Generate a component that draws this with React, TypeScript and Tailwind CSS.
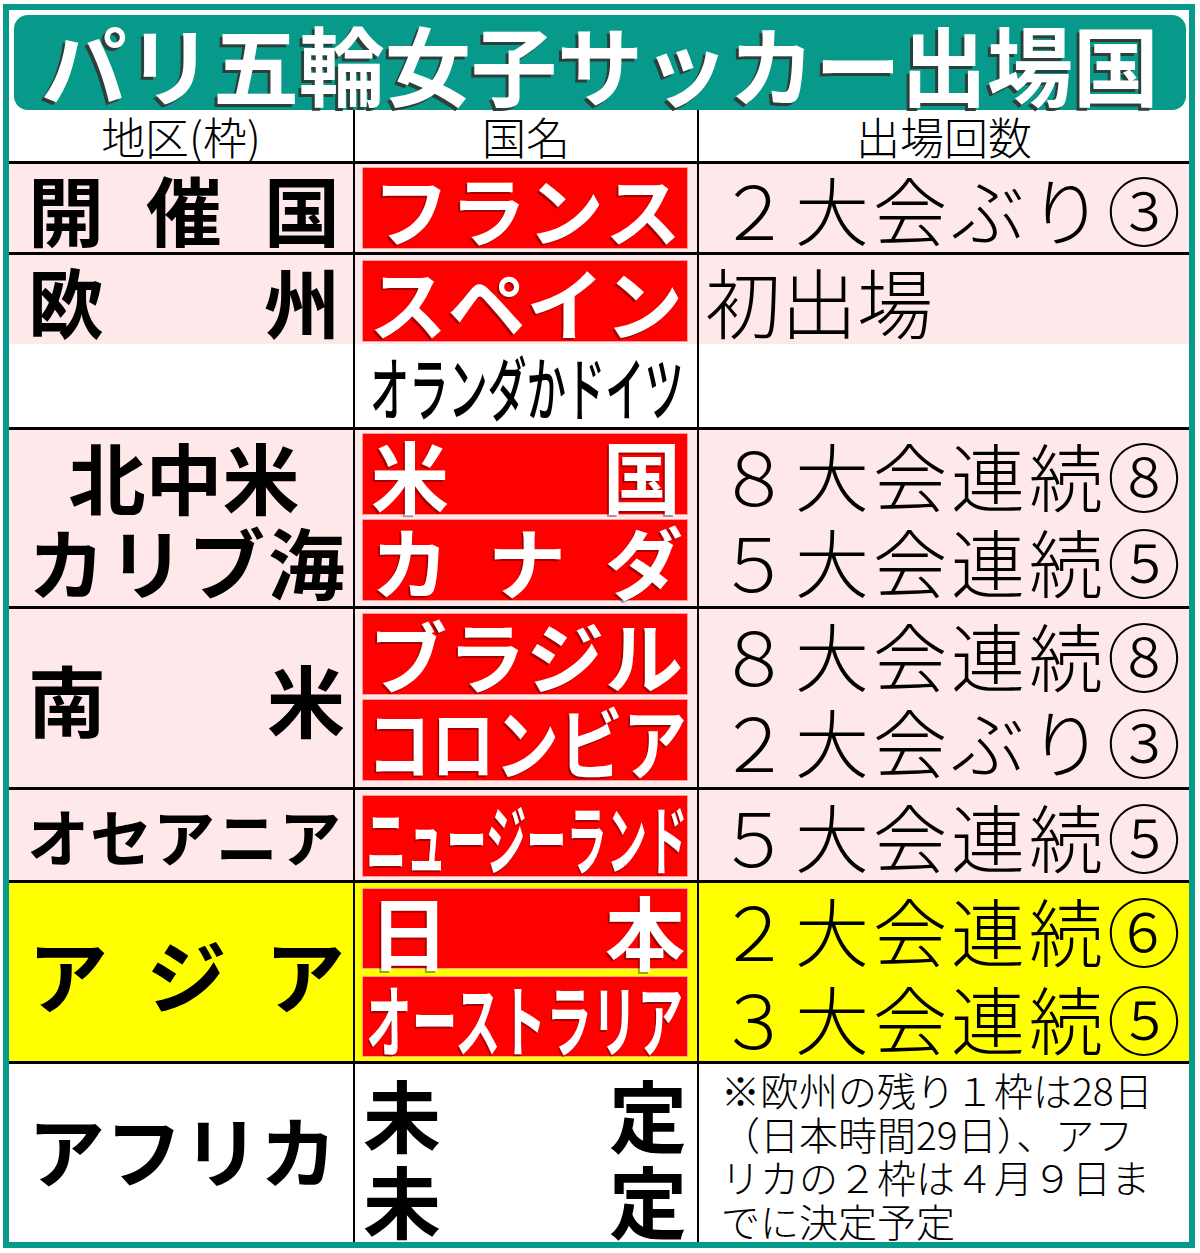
import React from "react";

function Chars({ t }: { t: string }) {
  return (
    <>
      {Array.from(t).map((c, i) => (
        <span key={i}>{c}</span>
      ))}
    </>
  );
}

function RedBox({ children, className }: { children: React.ReactNode; className: string }) {
  return (
    <div
      className={
        "w-[326px] bg-[#ff0000] border border-[#ff9c9c] flex items-center text-white font-bold leading-none [text-shadow:-2px_2px_0_rgba(0,0,0,0.35)] " +
        className
      }
    >
      {children}
    </div>
  );
}

function Condensed({ t, className }: { t: string; className: string }) {
  return (
    <span className={"inline-block whitespace-nowrap origin-left shrink-0 " + className}>{t}</span>
  );
}

export default function App() {
  return (
    <div className="w-[1200px] h-[1253px] bg-white pt-[4px] pl-[3px] text-black font-['Noto_Sans_CJK_JP','Noto_Sans_CJK_SC',sans-serif]">
      <div className="w-[1192px] h-[1244px] border-[6px] border-[#079a8a] bg-white flex flex-col">
        {/* title */}
        <div className="h-[100px] pt-[5px] pl-[5px] pr-[3px]">
          <div className="h-[95px] rounded-[14px] bg-[#079a8a] flex items-center justify-center">
            <span className="text-white font-bold text-[86px] leading-none [text-shadow:-3px_3px_0_#2e3f3b]">
              パリ五輪女子サッカー出場国
            </span>
          </div>
        </div>

        {/* header */}
        <div className="h-[54px] flex border-b-[3px] border-black text-[44px] leading-none font-light">
          <div className="w-[344px] flex items-center justify-center">地区(枠)</div>
          <div className="w-[344px] border-l-2 border-black flex items-center justify-center">国名</div>
          <div className="flex-1 border-l-2 border-black flex items-center justify-center">出場回数</div>
        </div>

        {/* 開催国 */}
        <div className="h-[91px] flex border-b-[3px] border-black bg-[#ffe8ea]">
          <div className="w-[344px] flex items-center justify-between pl-[19px] pr-[13px] text-[76px] font-bold leading-none">
            <Chars t="開催国" />
          </div>
          <div className="w-[344px] border-l-2 border-black pt-[3px] pl-[7px]">
            <RedBox className="h-[82px] justify-between pl-[10px] pr-[6px] text-[76px]">
              <Chars t="フランス" />
            </RedBox>
          </div>
          <div className="flex-1 border-l-2 border-black flex items-center justify-between pl-[18px] pr-[8px] text-[74px] leading-none font-light">
            <Chars t="２大会ぶり③" />
          </div>
        </div>

        {/* 欧州 */}
        <div className="h-[175px] flex border-b-[3px] border-black">
          <div className="w-[344px] flex flex-col">
            <div className="h-[89px] bg-[#ffe8ea] flex items-center justify-between pl-[19px] pr-[13px] text-[76px] font-bold leading-none">
              <Chars t="欧州" />
            </div>
            <div className="flex-1 bg-white"></div>
          </div>
          <div className="w-[344px] border-l-2 border-black flex flex-col">
            <div className="h-[89px] bg-[#ffe8ea] pt-[5px] pl-[7px]">
              <RedBox className="h-[82px] justify-between pl-[6px] pr-[4px] text-[78px]">
                <Chars t="スペイン" />
              </RedBox>
            </div>
            <div className="flex-1 bg-white flex items-center pl-[15px] text-[70px] leading-none font-medium">
              <Condensed t="オランダかドイツ" className="scale-x-[0.56]" />
            </div>
          </div>
          <div className="flex-1 border-l-2 border-black flex flex-col">
            <div className="h-[89px] bg-[#ffe8ea] flex items-center pl-[6px] text-[76px] leading-none font-light">
              初出場
            </div>
            <div className="flex-1 bg-white"></div>
          </div>
        </div>

        {/* 北中米カリブ海 */}
        <div className="h-[179px] flex border-b-[3px] border-black bg-[#ffe8ea]">
          <div className="w-[344px] flex flex-col justify-center font-bold leading-none text-[77px]">
            <div className="h-[85px] flex items-center justify-center pl-[6px]">北中米</div>
            <div className="h-[85px] flex items-center justify-between pl-[19px] pr-[8px]">
              <Chars t="カリブ海" />
            </div>
          </div>
          <div className="w-[344px] border-l-2 border-black pt-[3px] pl-[7px] flex flex-col gap-[4px]">
            <RedBox className="h-[82px] justify-between pl-[8px] pr-[6px] text-[78px]">
              <Chars t="米国" />
            </RedBox>
            <RedBox className="h-[82px] justify-between pl-[8px] pr-[4px] text-[78px]">
              <Chars t="カナダ" />
            </RedBox>
          </div>
          <div className="flex-1 border-l-2 border-black pt-[3px] flex flex-col gap-[4px] text-[74px] leading-none font-light">
            <div className="h-[82px] flex items-center justify-between pl-[18px] pr-[8px]">
              <Chars t="８大会連続⑧" />
            </div>
            <div className="h-[82px] flex items-center justify-between pl-[18px] pr-[8px]">
              <Chars t="５大会連続⑤" />
            </div>
          </div>
        </div>

        {/* 南米 */}
        <div className="h-[181px] flex border-b-[3px] border-black bg-[#ffe8ea]">
          <div className="w-[344px] flex items-center justify-between pl-[19px] pr-[8px] text-[78px] font-bold leading-none">
            <Chars t="南米" />
          </div>
          <div className="w-[344px] border-l-2 border-black pt-[4px] pl-[7px] flex flex-col gap-[4px]">
            <RedBox className="h-[82px] justify-between pl-[6px] pr-[4px] text-[78px]">
              <Chars t="ブラジル" />
            </RedBox>
            <RedBox className="h-[82px] pl-[4px] text-[78px]">
              <Condensed t="コロンビア" className="scale-x-[0.82]" />
            </RedBox>
          </div>
          <div className="flex-1 border-l-2 border-black pt-[4px] flex flex-col gap-[4px] text-[74px] leading-none font-light">
            <div className="h-[82px] flex items-center justify-between pl-[18px] pr-[8px]">
              <Chars t="８大会連続⑧" />
            </div>
            <div className="h-[82px] flex items-center justify-between pl-[18px] pr-[8px]">
              <Chars t="２大会ぶり③" />
            </div>
          </div>
        </div>

        {/* オセアニア */}
        <div className="h-[93px] flex border-b-[3px] border-black bg-[#ffe8ea]">
          <div className="w-[344px] flex items-center justify-between pl-[18px] pr-[12px] text-[62px] font-bold leading-none">
            <Chars t="オセアニア" />
          </div>
          <div className="w-[344px] border-l-2 border-black pt-[5px] pl-[7px]">
            <RedBox className="h-[82px] pl-[3px] text-[76px]">
              <Condensed t="ニュージーランド" className="scale-x-[0.53]" />
            </RedBox>
          </div>
          <div className="flex-1 border-l-2 border-black flex items-center justify-between pl-[18px] pr-[8px] text-[74px] leading-none font-light">
            <Chars t="５大会連続⑤" />
          </div>
        </div>

        {/* アジア */}
        <div className="h-[181px] flex border-b-[3px] border-black bg-[#ffff00]">
          <div className="w-[344px] flex items-center justify-between pl-[19px] pr-[8px] text-[80px] font-bold leading-none">
            <Chars t="アジア" />
          </div>
          <div className="w-[344px] border-l-2 border-black pt-[5px] pl-[7px] flex flex-col gap-[7px]">
            <RedBox className="h-[81px] justify-between pl-[6px] pr-[2px] text-[80px]">
              <Chars t="日本" />
            </RedBox>
            <RedBox className="h-[81px] pl-[3px] text-[78px]">
              <Condensed t="オーストラリア" className="scale-x-[0.585]" />
            </RedBox>
          </div>
          <div className="flex-1 border-l-2 border-black pt-[5px] flex flex-col gap-[7px] text-[74px] leading-none font-light">
            <div className="h-[81px] flex items-center justify-between pl-[18px] pr-[8px]">
              <Chars t="２大会連続⑥" />
            </div>
            <div className="h-[81px] flex items-center justify-between pl-[18px] pr-[8px]">
              <Chars t="３大会連続⑤" />
            </div>
          </div>
        </div>

        {/* アフリカ */}
        <div className="flex-1 flex bg-white">
          <div className="w-[344px] flex items-center justify-between pl-[19px] pr-[16px] pb-[10px] text-[77px] font-bold leading-none">
            <Chars t="アフリカ" />
          </div>
          <div className="w-[344px] border-l-2 border-black pt-[6px] flex flex-col text-[78px] font-bold leading-none">
            <div className="h-[86px] flex items-center justify-between pl-[8px] pr-[10px]">
              <Chars t="未定" />
            </div>
            <div className="h-[86px] flex items-center justify-between pl-[8px] pr-[10px]">
              <Chars t="未定" />
            </div>
          </div>
          <div className="flex-1 border-l-2 border-black pl-[22px] pt-[4px] text-[39px] leading-[43.5px] font-light whitespace-nowrap">
            <div>※欧州の残り１枠は28日</div>
            <div>（日本時間29日）、アフ</div>
            <div>リカの２枠は４月９日ま</div>
            <div>でに決定予定</div>
          </div>
        </div>
      </div>
    </div>
  );
}
